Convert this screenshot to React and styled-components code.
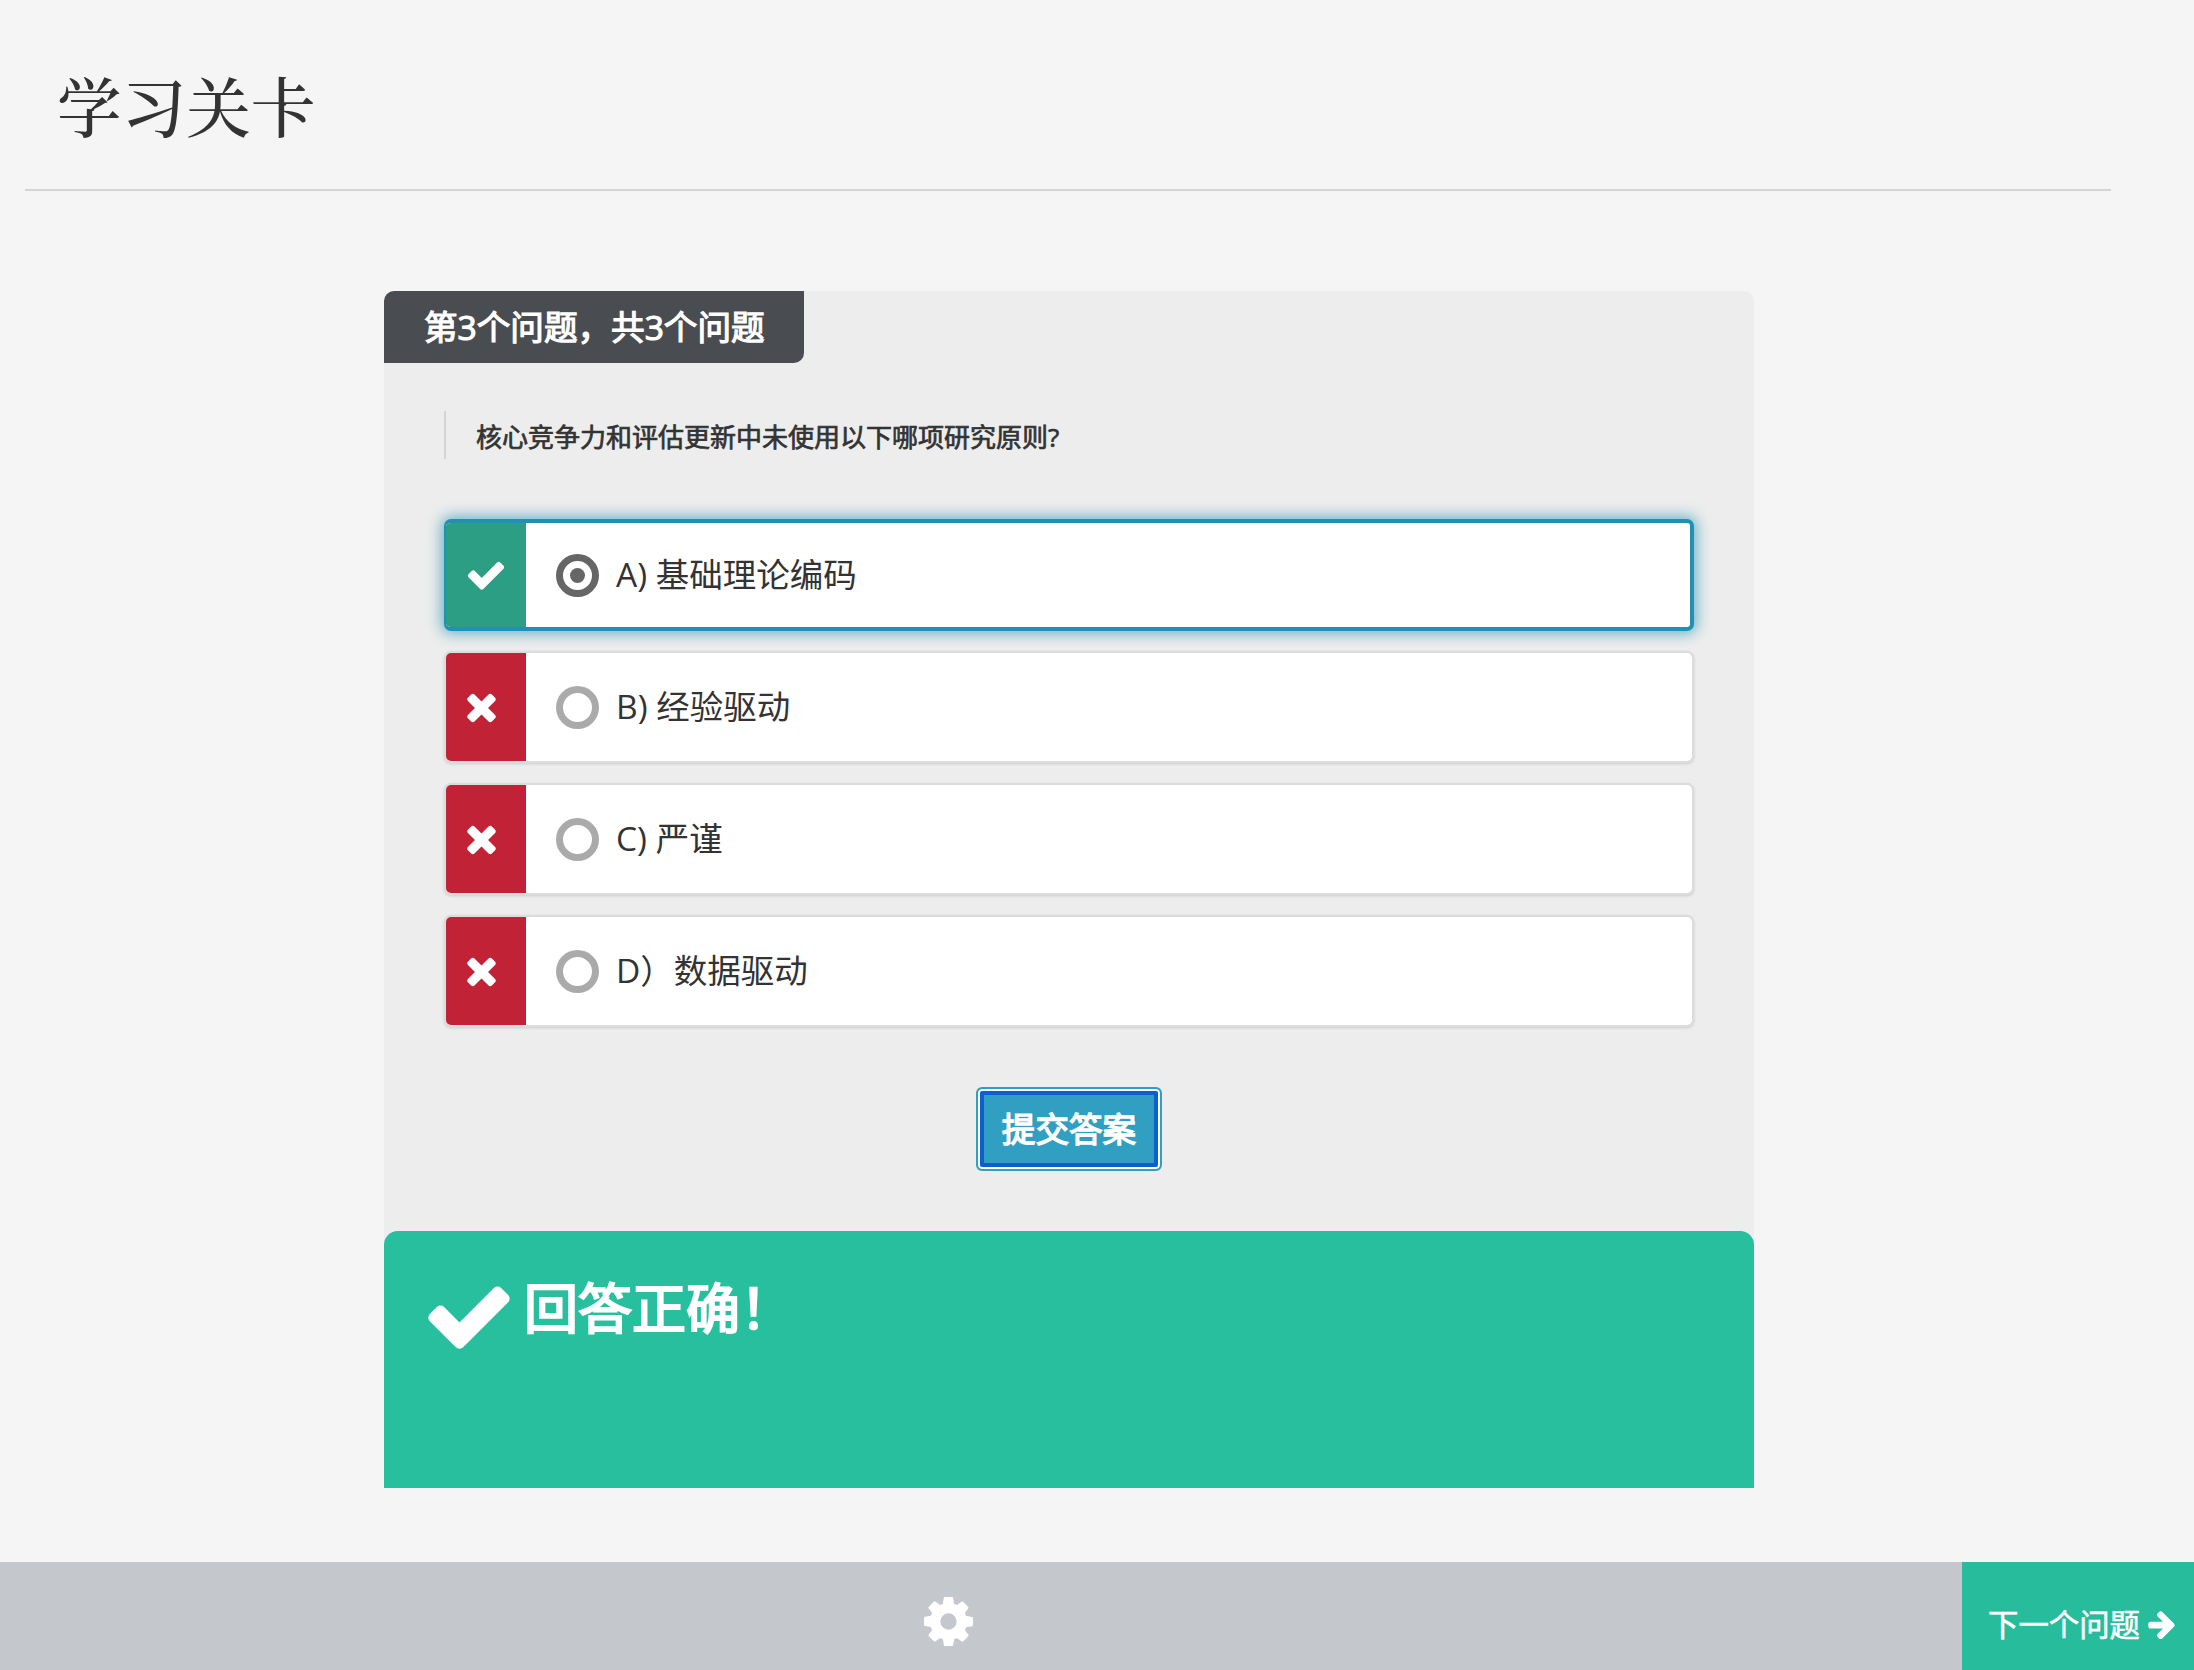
import React from "react";
import styled, { createGlobalStyle } from "styled-components";

const Global = createGlobalStyle`
  html, body { margin: 0; padding: 0; background: #f5f5f5; }
  body { font-family: "Open Sans", "Noto Sans CJK SC", sans-serif; color: #333; }
  * { box-sizing: border-box; }
`;

const PATHS = {
  check: "M1671 566q0 40-28 68l-724 724-136 136q-28 28-68 28t-68-28l-136-136-362-362q-28-28-28-68t28-68l136-136q28-28 68-28t68 28l294 295 656-657q28-28 68-28t68 28l136 136q28 28 28 68z",
  times: "M1490 1322q0 40-28 68l-136 136q-28 28-68 28t-68-28l-294-294-294 294q-28 28-68 28t-68-28l-136-136q-28-28-28-68t28-68l294-294-294-294q-28-28-28-68t28-68l136-136q28-28 68-28t68 28l294 294 294-294q28-28 68-28t68 28l136 136q28 28 28 68t-28 68l-294 294 294 294q28 28 28 68z",
  cog: "M1152 896q0-106-75-181t-181-75-181 75-75 181 75 181 181 75 181-75 75-181zm512-109v222q0 12-8 23t-20 13l-185 28q-19 54-39 91 35 50 107 138 10 12 10 25t-9 23q-27 37-99 108t-94 71q-12 0-26-9l-138-108q-44 23-91 38-16 136-29 186-7 28-36 28h-222q-14 0-24.500-8.500t-11.500-21.500l-28-184q-49-16-90-37l-141 107q-10 9-25 9-14 0-25-11-126-114-165-168-7-10-7-23 0-12 8-23 15-21 51-66.500t54-70.500q-27-50-41-99l-183-27q-13-2-21-12.500t-8-23.500v-222q0-12 8-23t19-13l186-28q14-46 39-92-40-57-107-138-10-12-10-24 0-10 9-23 26-36 98.500-107.500t94.500-71.500q13 0 26 10l138 107q44-23 91-38 16-136 29-186 7-28 36-28h222q14 0 24.500 8.500t11.500 21.500l28 184q49 16 90 37l142-107q9-9 24-9 13 0 25 10 129 119 165 170 7 8 7 22 0 12-8 23-15 21-51 66.500t-54 70.500q26 50 41 98l183 28q13 2 21 12.500t8 23.500z",
  arrow: "M1600 960q0 54-37 91l-651 651q-39 37-91 37-51 0-90-37l-75-75q-38-38-38-91t38-91l293-293h-704q-52 0-84.500-37.500t-32.500-90.500v-128q0-53 32.500-90.500t84.500-37.500h704l-293-294q-38-36-38-90t38-90l75-75q38-38 90-38 53 0 91 38l651 651q37 35 37 90z",
};

const Svg = styled.svg`
  width: ${(p) => p.$size}px;
  height: ${(p) => p.$size}px;
  flex: none;
  display: block;
  fill: currentColor;
`;
const Icon = ({ name, size }) => (
  <Svg $size={size} viewBox="0 0 1792 1792" aria-hidden="true">
    <path d={PATHS[name]} />
  </Svg>
);

const Page = styled.div`
  width: 2194px;
  height: 1670px;
  display: flex;
  flex-direction: column;
  overflow: hidden;
`;
const Header = styled.header`
  margin: 0 83px 0 25px;
  height: 191px;
  padding: 65px 0 0 32px;
  border-bottom: 2px solid #d4d4d4;
`;
const Title = styled.h1`
  margin: 0;
  font-family: "Liberation Serif", "Noto Serif CJK SC", serif;
  font-weight: 500;
  font-size: 64.6px;
  line-height: 90px;
  color: #333;
`;
const Card = styled.main`
  width: 1370px;
  margin: 100px 0 0 384px;
  background: #ededed;
  border-radius: 10px;
  height: 1197px;
  display: flex;
  flex-direction: column;
`;
const Tab = styled.div`
  width: 420px;
  height: 72px;
  background: #494c50;
  color: #fff;
  font-size: 33.6px;
  font-weight: 400;
  -webkit-text-stroke: 1.2px #fff;
  line-height: 72px;
  padding-left: 40px;
  border-radius: 10px 0 10px 0;
  white-space: nowrap;
`;
const Question = styled.blockquote`
  margin: 48px 0 0 60px;
  height: 48px;
  border-left: 2px solid #d4d4d4;
  padding-left: 30px;
  font-size: 26px;
  font-weight: 400;
  -webkit-text-stroke: 0.7px #333;
  line-height: 52px;
  white-space: nowrap;
`;
const Options = styled.div`
  margin: 60px 60px 0 60px;
  display: flex;
  flex-direction: column;
  gap: 20px;
`;
const Option = styled.label`
  height: 112px;
  display: flex;
  align-items: center;
  background: #fff;
  border-radius: 7px;
  overflow: hidden;
  border: ${(p) => (p.$selected ? "4px solid #2191b3" : "2px solid #dcdcdc")};
  border-left-width: 2px;
  box-shadow: ${(p) => (p.$selected ? "0 0 14px 3px rgba(33,145,179,0.62)" : "0 1px 3px rgba(0,0,0,0.14)")};
`;
const Status = styled.div`
  width: 80px;
  align-self: stretch;
  flex: none;
  margin: ${(p) => (p.$ok ? "-2px 0" : "-1px 0")};
  padding-bottom: ${(p) => (p.$ok ? "0" : "2px")};
  padding-left: ${(p) => (p.$ok ? "19px" : "14px")};
  background: ${(p) => (p.$ok ? "#2c9e84" : "#c22235")};
  color: #fff;
  display: flex;
  align-items: center;
`;
const Radio = styled.span`
  width: 43px;
  height: 43px;
  margin-left: 30px;
  border-radius: 50%;
  flex: none;
  border: 7.5px solid ${(p) => (p.$on ? "#666" : "#aaa")};
  display: flex;
  align-items: center;
  justify-content: center;
  background: #fff;
  &::after {
    content: "";
    width: 15px;
    height: 15px;
    border-radius: 50%;
    background: ${(p) => (p.$on ? "#666" : "transparent")};
  }
`;
const OptionText = styled.span`
  margin-left: 17px;
  margin-top: -2px;
  font-size: 33.5px;
  line-height: 44px;
  color: #333;
  white-space: nowrap;
`;
const Actions = styled.div`
  margin-top: 60px;
  display: flex;
  padding-left: 592px;
`;
const Submit = styled.button`
  width: 186px;
  height: 84px;
  padding: 0 0 4px;
  background: #319fc1;
  color: #fff;
  font: 400 33.6px "Open Sans", "Noto Sans CJK SC", sans-serif;
  -webkit-text-stroke: 1.4px #fff;
  border-radius: 6px;
  border: 2px solid #319fc1;
  box-shadow: inset 0 0 0 2px #fff, inset 0 0 0 6px #0b60cf;
`;
const Result = styled.section`
  margin-top: auto;
  height: 257px;
  background: #27bf9e;
  border-radius: 14px 14px 0 0;
  color: #fff;
  display: flex;
  align-items: flex-start;
  padding: 38px 0 0 38px;
`;
const ResultTitle = styled.h2`
  margin: 1px 0 0 8px;
  font-size: 54px;
  font-weight: 400;
  -webkit-text-stroke: 2.2px #fff;
  line-height: 76px;
  white-space: nowrap;
`;
const ResultIcon = styled.span`
  display: flex;
`;
const Footer = styled.footer`
  margin-top: 74px;
  height: 108px;
  background: #c4c8cc;
  display: flex;
  justify-content: space-between;
`;
const Settings = styled.button`
  border: 0;
  background: transparent;
  color: #fff;
  padding: 10px 0 0;
  margin: 0 0 0 920px;
  display: flex;
  align-items: center;
`;
const Next = styled.button`
  width: 232px;
  border: 0;
  background: #27bc9c;
  color: #fff;
  padding: 13px 0 0 26px;
  font: 400 30.4px "Open Sans", "Noto Sans CJK SC", sans-serif;
  -webkit-text-stroke: 0.6px #fff;
  display: flex;
  align-items: center;
  gap: 1px;
  white-space: nowrap;
`;
const ArrowWrap = styled.span`
  display: flex;
  margin-top: 2px;
  margin-left: 5px;
`;

const options = [
  { text: "A) 基础理论编码", ok: true },
  { text: "B) 经验驱动" },
  { text: "C) 严谨" },
  { text: "D）数据驱动" },
];

export default function App() {
  return (
    <Page>
      <Global />
      <Header>
        <Title>学习关卡</Title>
      </Header>
      <Card>
        <Tab>第3个问题，共3个问题</Tab>
        <Question>核心竞争力和评估更新中未使用以下哪项研究原则?</Question>
        <Options>
          {options.map((o) => (
            <Option key={o.text} $selected={o.ok}>
              <Status $ok={o.ok}>
                <Icon name={o.ok ? "check" : "times"} size={o.ok ? 42 : 43} />
              </Status>
              <Radio $on={o.ok} />
              <OptionText>{o.text}</OptionText>
            </Option>
          ))}
        </Options>
        <Actions>
          <Submit>提交答案</Submit>
        </Actions>
        <Result>
          <ResultIcon><Icon name="check" size={94} /></ResultIcon>
          <ResultTitle>回答正确！</ResultTitle>
        </Result>
      </Card>
      <Footer>
        <Settings aria-label="设置"><Icon name="cog" size={57} /></Settings>
        <Next>下一个问题<ArrowWrap><Icon name="arrow" size={32} /></ArrowWrap></Next>
      </Footer>
    </Page>
  );
}
